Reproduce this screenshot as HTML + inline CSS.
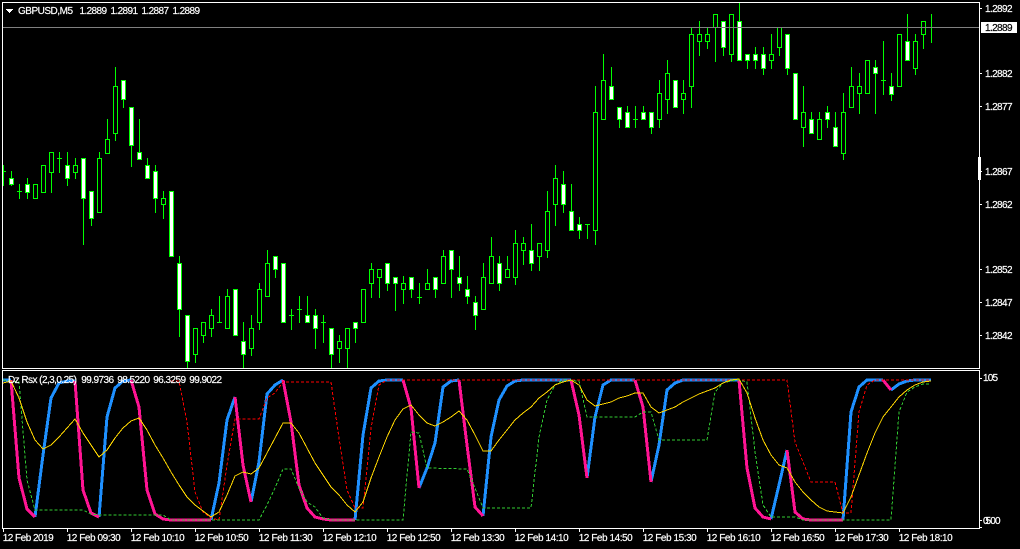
<!DOCTYPE html>
<html><head><meta charset="utf-8"><style>
html,body{margin:0;padding:0;background:#000;width:1020px;height:549px;overflow:hidden}
svg{display:block}
text{font-family:"Liberation Sans",sans-serif;font-size:10px;fill:#fff;stroke:#fff;stroke-width:.2px}
</style></head><body>
<svg xmlns="http://www.w3.org/2000/svg" width="1020" height="549" viewBox="0 0 1020 549">
<rect width="1020" height="549" fill="#000"/>
<g shape-rendering="crispEdges" fill="none" stroke="#0f0" stroke-width="1">
<path d="M3.5 165V186M11.5 171V186M19.5 184V199M27.5 178V199M51.5 152V193M59.5 152V173M67.5 152V186M75.5 158V179M83.5 158V245M91.5 191V226M99.5 152V213M107.5 119V154M115.5 67V141M123.5 80V108M131.5 107V167M139.5 119V160M147.5 158V179M155.5 165V213M163.5 191V219M179.5 256V337M187.5 315V368M195.5 328V363M203.5 322V343M211.5 309V337M219.5 296V323M227.5 289V329M243.5 322V368M251.5 315V356M259.5 283V330M267.5 250V297M275.5 256V278M291.5 309V330M299.5 296V323M307.5 296V323M315.5 309V349M323.5 315V343M331.5 328V368M339.5 335V363M347.5 328V368M355.5 322V343M371.5 263V298M379.5 269V298M387.5 263V291M395.5 277V311M403.5 276V304M411.5 277V298M419.5 283V304M427.5 269V290M435.5 277V298M443.5 250V284M451.5 250V298M459.5 256V291M467.5 276V304M475.5 296V330M483.5 263V310M491.5 237V284M499.5 256V291M507.5 256V278M515.5 230V285M523.5 237V265M531.5 224V271M539.5 243V271M547.5 191V258M555.5 165V226M563.5 171V213M571.5 184V231M579.5 217V239M587.5 224V239M595.5 86V245M603.5 54V120M611.5 67V100M619.5 107V128M627.5 106V128M635.5 106V128M643.5 106V120M651.5 112V134M659.5 80V128M667.5 60V114M683.5 80V114M691.5 28V108M699.5 21V56M707.5 28V49M715.5 14V62M723.5 21V56M731.5 14V62M739.5 3V61M747.5 54V69M755.5 47V69M763.5 47V75M771.5 34V69M779.5 27V56M787.5 34V75M803.5 86V147M811.5 112V134M819.5 112V140M827.5 106V128M835.5 112V147M843.5 93V160M851.5 67V108M859.5 73V114M875.5 60V114M883.5 41V95M891.5 73V101M907.5 14V61M915.5 34V75M923.5 21V49M931.5 14V43"/>
<path d="M3 171.5h3M17 191.5h5M57 158.5h5M217 322.5h5M289 315.5h5M297 309.5h5M321 322.5h5M417 297.5h5M585 224.5h5M633 119.5h5M881 80.5h5"/>
<path fill="#000" d="M33.5 184.5h4v14h-4zM41.5 165.5h4v27h-4zM49.5 152.5h4v20h-4zM73.5 165.5h4v7h-4zM97.5 158.5h4v54h-4zM105.5 139.5h4v14h-4zM113.5 86.5h4v47h-4zM161.5 198.5h4v6h-4zM193.5 328.5h4v26h-4zM201.5 322.5h4v13h-4zM209.5 315.5h4v13h-4zM225.5 296.5h4v32h-4zM249.5 328.5h4v20h-4zM257.5 289.5h4v33h-4zM265.5 263.5h4v33h-4zM337.5 341.5h4v7h-4zM345.5 328.5h4v20h-4zM361.5 289.5h4v33h-4zM369.5 269.5h4v14h-4zM377.5 269.5h4v8h-4zM401.5 283.5h4v6h-4zM425.5 283.5h4v6h-4zM441.5 256.5h4v27h-4zM481.5 277.5h4v32h-4zM489.5 256.5h4v27h-4zM505.5 269.5h4v8h-4zM513.5 243.5h4v34h-4zM521.5 243.5h4v7h-4zM537.5 243.5h4v13h-4zM545.5 211.5h4v39h-4zM553.5 178.5h4v26h-4zM593.5 112.5h4v118h-4zM601.5 80.5h4v39h-4zM657.5 93.5h4v26h-4zM665.5 73.5h4v26h-4zM681.5 93.5h4v6h-4zM689.5 34.5h4v52h-4zM697.5 34.5h4v7h-4zM705.5 34.5h4v7h-4zM713.5 14.5h4v13h-4zM729.5 14.5h4v40h-4zM769.5 54.5h4v6h-4zM777.5 27.5h4v20h-4zM801.5 112.5h4v15h-4zM817.5 119.5h4v20h-4zM841.5 112.5h4v41h-4zM849.5 86.5h4v21h-4zM857.5 86.5h4v7h-4zM865.5 60.5h4v33h-4zM897.5 34.5h4v52h-4zM913.5 41.5h4v27h-4zM921.5 21.5h4v13h-4z"/>
<path fill="#fff" d="M9.5 178.5h4v6h-4zM25.5 184.5h4v8h-4zM65.5 165.5h4v13h-4zM81.5 158.5h4v40h-4zM89.5 191.5h4v27h-4zM121.5 80.5h4v19h-4zM129.5 107.5h4v38h-4zM137.5 152.5h4v7h-4zM145.5 165.5h4v13h-4zM153.5 171.5h4v27h-4zM169.5 191.5h4v65h-4zM177.5 263.5h4v46h-4zM185.5 315.5h4v46h-4zM233.5 289.5h4v46h-4zM241.5 341.5h4v13h-4zM273.5 256.5h4v13h-4zM281.5 263.5h4v59h-4zM305.5 315.5h4v7h-4zM313.5 315.5h4v13h-4zM329.5 328.5h4v26h-4zM353.5 322.5h4v6h-4zM385.5 263.5h4v20h-4zM393.5 277.5h4v6h-4zM409.5 277.5h4v12h-4zM433.5 277.5h4v12h-4zM449.5 250.5h4v19h-4zM457.5 277.5h4v6h-4zM465.5 289.5h4v7h-4zM473.5 302.5h4v13h-4zM497.5 263.5h4v20h-4zM529.5 250.5h4v13h-4zM561.5 184.5h4v20h-4zM569.5 211.5h4v19h-4zM577.5 224.5h4v6h-4zM609.5 86.5h4v13h-4zM617.5 107.5h4v12h-4zM625.5 112.5h4v15h-4zM641.5 112.5h4v7h-4zM649.5 112.5h4v15h-4zM673.5 80.5h4v27h-4zM721.5 21.5h4v26h-4zM737.5 21.5h4v39h-4zM745.5 54.5h4v6h-4zM753.5 54.5h4v6h-4zM761.5 54.5h4v14h-4zM785.5 34.5h4v34h-4zM793.5 73.5h4v46h-4zM809.5 119.5h4v14h-4zM825.5 112.5h4v7h-4zM833.5 127.5h4v19h-4zM873.5 67.5h4v6h-4zM889.5 86.5h4v8h-4zM905.5 41.5h4v19h-4z"/>
</g>
<g shape-rendering="crispEdges" stroke-width="1">
<path d="M3 27.5H979" stroke="#808080"/>
<path fill="none" stroke="#fff" d="M2.5 368.5V2.5H979.5V368.5M2 368.5H980M2.5 528.5V370.5H979.5V528.5M2 528.5H980"/>
<path fill="none" stroke="#fff" d="M980 8.5h2M980 73.5h2M980 106.5h2M980 171.5h2M980 204.5h2M980 269.5h2M980 302.5h2M980 335.5h2M980 378.5h2M980 520.5h2M980 527.5h2M3.5 529V532M67.5 529V532M131.5 529V532M195.5 529V532M259.5 529V532M323.5 529V532M387.5 529V532M451.5 529V532M515.5 529V532M579.5 529V532M643.5 529V532M707.5 529V532M771.5 529V532M835.5 529V532M899.5 529V532"/>
<rect x="978" y="157" width="3" height="23" fill="#fff"/>
<rect x="981" y="22" width="36" height="11" fill="#fff"/>
<path d="M6 9.5h7M7 10.5h5M8 11.5h3M9 12.5h1" stroke="#fff" fill="none"/>
</g>
<g shape-rendering="crispEdges" fill="none" stroke-width="3" stroke-linejoin="round">
<g stroke="#1e90ff">
<polyline points="3,380 11,380"/>
<polyline points="35,517 43,455 51,398 59,383 67,381 75,381"/>
<polyline points="99,517 107,417 115,388 123,381 131,380"/>
<polyline points="211,520 219,483 227,420 235,397"/>
<polyline points="251,502 259,462 267,394 275,385 283,380"/>
<polyline points="355,520 363,435 371,388 379,381 387,380 403,380"/>
<polyline points="419,488 427,468 435,443 443,387 451,381 459,380"/>
<polyline points="483,516 491,437 499,400 507,386 515,381 523,380 571,380"/>
<polyline points="587,478 595,417 603,385 611,380 635,380"/>
<polyline points="651,482 659,445 667,390 675,383 683,380 739,380"/>
<polyline points="771,519 779,485 787,450"/>
<polyline points="843,520 851,412 859,387 867,380 883,380"/>
<polyline points="891,390 899,384 907,381 915,380 931,380"/>
</g>
<g stroke="#ff1493">
<polyline points="11,380 19,478 27,509 35,517"/>
<polyline points="75,381 83,490 91,513 99,517"/>
<polyline points="131,380 139,407 147,490 155,514 163,519 171,520 211,520"/>
<polyline points="235,397 243,465 251,502"/>
<polyline points="283,380 291,422 299,485 307,508 315,517 323,519 331,520 355,520"/>
<polyline points="403,380 411,408 419,488"/>
<polyline points="459,380 467,445 475,507 483,516"/>
<polyline points="571,380 579,415 587,478"/>
<polyline points="635,380 643,407 651,482"/>
<polyline points="739,380 747,468 755,508 763,517 771,519"/>
<polyline points="787,450 795,512 803,519 811,520 843,520"/>
<polyline points="883,380 891,390"/>
</g>
</g>
<g shape-rendering="crispEdges" fill="none" stroke-width="1">
<polyline stroke="#f00" stroke-dasharray="3 2" points="171,381 179,381 187,422 195,492 203,512 211,518 219,520 227,465 235,419 259,419 267,398 275,393 283,382 331,382 339,438 347,490 355,508 363,508 371,428 379,385 387,380 787,380 795,442 803,462 811,482 835,482 843,513 851,513 859,412 867,385 875,380 931,380"/>
<polyline stroke="#32cd32" stroke-dasharray="3 2" points="3,380 19,382 27,480 35,510 83,510 91,514 99,515 163,515 171,520 259,520 267,505 275,488 283,469 291,469 299,488 307,502 315,507 323,518 331,520 403,520 411,432 419,433 427,468 467,469 475,488 483,508 531,508 539,437 547,400 555,385 563,380 579,381 587,417 635,417 643,412 651,412 659,440 707,440 715,392 723,383 731,381 739,380 747,382 755,452 763,505 771,517 795,517 803,520 891,520 899,412 907,392 915,387 923,384 931,384"/>
<polyline stroke="#ffd700" points="3,383 11,381 19,398 27,422 35,440 43,449 51,445 59,437 67,428 75,419 83,433 91,445 99,457 107,450 115,438 123,428 131,421 139,418 147,430 155,445 163,458 171,472 179,485 187,497 195,505 203,511 211,517 219,512 227,495 235,476 243,472 251,474 259,468 267,453 275,438 283,423 291,423 299,433 307,448 315,463 323,475 331,487 339,495 347,505 355,512 363,502 371,478 379,457 387,437 395,420 403,409 411,405 419,415 427,423 435,426 443,422 451,417 459,411 467,420 475,435 483,451 491,451 499,440 507,430 515,420 523,413 531,407 539,398 547,392 555,385 563,382 571,380 579,385 587,400 595,406 603,404 611,402 619,398 627,396 635,393 643,393 651,407 659,413 667,410 675,407 683,402 691,398 699,394 707,391 715,388 723,383 731,380 739,379 747,393 755,418 763,440 771,455 779,465 787,468 795,482 803,492 811,500 819,507 827,511 835,512 843,513 851,497 859,475 867,453 875,433 883,417 891,407 899,397 907,390 915,385 923,382 931,381"/>
</g>
<g>
<text x="18" y="14" textLength="55" lengthAdjust="spacing">GBPUSD,M5</text>
<text x="79.5" y="14" textLength="27.5" lengthAdjust="spacing">1.2889</text>
<text x="110.5" y="14" textLength="27.5" lengthAdjust="spacing">1.2891</text>
<text x="141.5" y="14" textLength="27.5" lengthAdjust="spacing">1.2887</text>
<text x="172.5" y="14" textLength="27.5" lengthAdjust="spacing">1.2889</text>
<text x="985" y="12" textLength="27.5" lengthAdjust="spacing">1.2892</text>
<text x="985" y="31" textLength="27.5" lengthAdjust="spacing" style="fill:#000;stroke:#000">1.2889</text>
<text x="985" y="77" textLength="27.5" lengthAdjust="spacing">1.2882</text>
<text x="985" y="110" textLength="27.5" lengthAdjust="spacing">1.2877</text>
<text x="985" y="175" textLength="27.5" lengthAdjust="spacing">1.2867</text>
<text x="985" y="208" textLength="27.5" lengthAdjust="spacing">1.2862</text>
<text x="985" y="273" textLength="27.5" lengthAdjust="spacing">1.2852</text>
<text x="985" y="306" textLength="27.5" lengthAdjust="spacing">1.2847</text>
<text x="985" y="339" textLength="27.5" lengthAdjust="spacing">1.2842</text>
<text x="983" y="381" textLength="15" lengthAdjust="spacing">105</text>
<text x="983" y="524">0</text>
<text x="985.5" y="524" textLength="15" lengthAdjust="spacing">500</text>
<text x="8" y="383" textLength="69" lengthAdjust="spacing">Dz Rsx (2,3,0.25)</text>
<text x="81.3" y="383" textLength="32.7" lengthAdjust="spacing">99.9736</text>
<text x="117.3" y="383" textLength="32.7" lengthAdjust="spacing">98.5220</text>
<text x="153.3" y="383" textLength="32.7" lengthAdjust="spacing">96.3259</text>
<text x="189.3" y="383" textLength="32.7" lengthAdjust="spacing">99.9022</text>
<text x="2.7" y="541" textLength="51" lengthAdjust="spacing">12 Feb 2019</text>
<text x="66.7" y="541" textLength="54" lengthAdjust="spacing">12 Feb 09:30</text>
<text x="130.7" y="541" textLength="54" lengthAdjust="spacing">12 Feb 10:10</text>
<text x="194.7" y="541" textLength="54" lengthAdjust="spacing">12 Feb 10:50</text>
<text x="258.7" y="541" textLength="54" lengthAdjust="spacing">12 Feb 11:30</text>
<text x="322.7" y="541" textLength="54" lengthAdjust="spacing">12 Feb 12:10</text>
<text x="386.7" y="541" textLength="54" lengthAdjust="spacing">12 Feb 12:50</text>
<text x="450.7" y="541" textLength="54" lengthAdjust="spacing">12 Feb 13:30</text>
<text x="514.7" y="541" textLength="54" lengthAdjust="spacing">12 Feb 14:10</text>
<text x="578.7" y="541" textLength="54" lengthAdjust="spacing">12 Feb 14:50</text>
<text x="642.7" y="541" textLength="54" lengthAdjust="spacing">12 Feb 15:30</text>
<text x="706.7" y="541" textLength="54" lengthAdjust="spacing">12 Feb 16:10</text>
<text x="770.7" y="541" textLength="54" lengthAdjust="spacing">12 Feb 16:50</text>
<text x="834.7" y="541" textLength="54" lengthAdjust="spacing">12 Feb 17:30</text>
<text x="898.7" y="541" textLength="54" lengthAdjust="spacing">12 Feb 18:10</text>
</g>
</svg>
</body></html>
